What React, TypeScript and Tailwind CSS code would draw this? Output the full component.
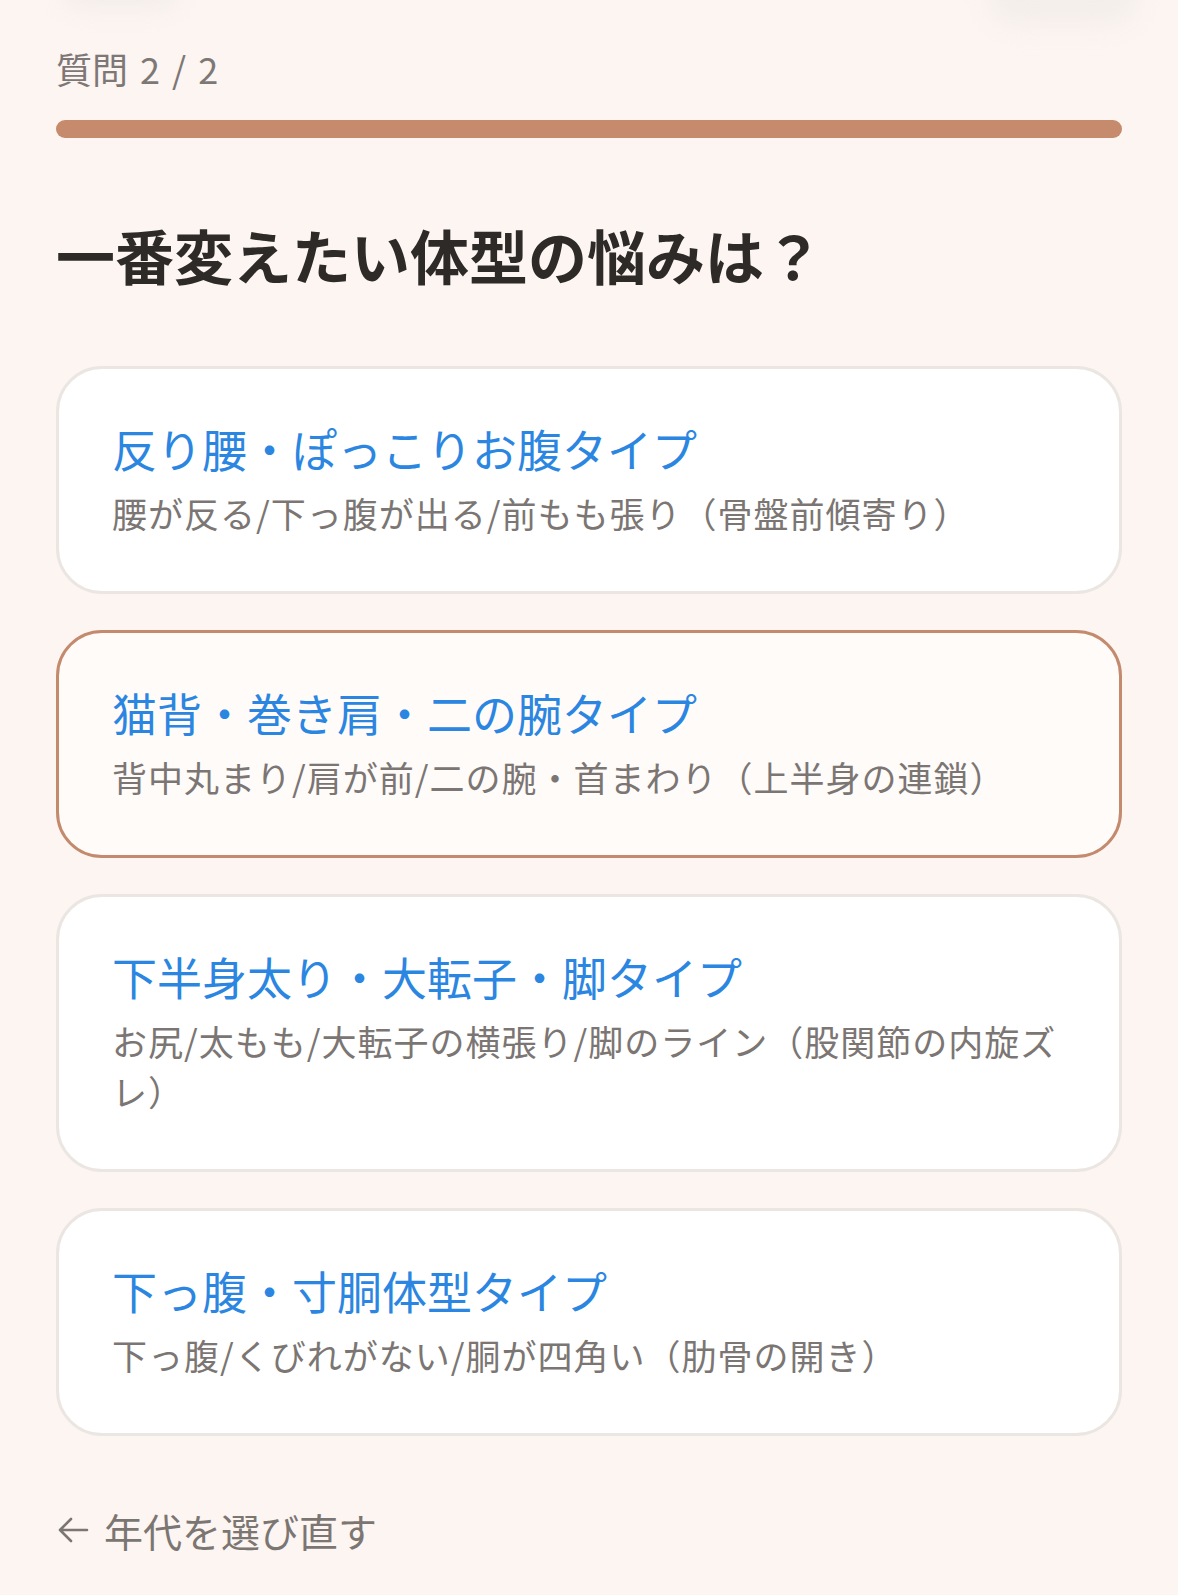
const options = [
  {
    title: '反り腰・ぽっこりお腹タイプ',
    sub: '腰が反る/下っ腹が出る/前もも張り（骨盤前傾寄り）',
    selected: false,
  },
  {
    title: '猫背・巻き肩・二の腕タイプ',
    sub: '背中丸まり/肩が前/二の腕・首まわり（上半身の連鎖）',
    selected: true,
  },
  {
    title: '下半身太り・大転子・脚タイプ',
    sub: 'お尻/太もも/大転子の横張り/脚のライン（股関節の内旋ズレ）',
    selected: false,
  },
  {
    title: '下っ腹・寸胴体型タイプ',
    sub: '下っ腹/くびれがない/胴が四角い（肋骨の開き）',
    selected: false,
  },
]

function OptionCard({ title, sub, selected }: { title: string; sub: string; selected: boolean }) {
  return (
    <button
      type="button"
      className={
        selected
          ? 'w-full text-left rounded-[46px] border-[3px] border-[#c38a6e] bg-[#fffbf9] pl-[53px] pr-[46px] pt-[46px] pb-[53px]'
          : 'w-full text-left rounded-[46px] border-[3px] border-[#ebe6e2] bg-white pl-[53px] pr-[46px] pt-[46px] pb-[53px]'
      }
    >
      <div className="text-[45px] leading-[1.5] text-[#2b86e1]">{title}</div>
      <div className="mt-[6px] text-[35px] leading-[1.42] tracking-[1px] text-[#7b7673]">{sub}</div>
    </button>
  )
}

export default function App() {
  return (
    <div
      className="relative min-h-[1595px] overflow-hidden bg-[#fcf5f2] px-14"
      style={{ fontFamily: '"Noto Sans CJK JP", "Noto Sans", sans-serif' }}
    >
      {/* faint blurred shapes peeking in at the top edge */}
      <div className="absolute left-[60px] top-[-30px] h-[40px] w-[120px] rounded-full bg-[#ece7e3] blur-[12px] opacity-50" />
      <div className="absolute right-[40px] top-[-30px] h-[55px] w-[150px] rounded-full bg-[#ece7e3] blur-[14px] opacity-50" />

      <div className="pt-[41px] text-[36px] leading-[1.5] text-[#7d7875] [word-spacing:4px]">質問 2 / 2</div>

      <div className="mt-[25px] h-[18px] rounded-full bg-[#c68a6c]" />

      <h1 className="mt-[76px] text-[59px] font-bold leading-[1.4] text-[#2d2a27]">
        一番変えたい体型の悩みは？
      </h1>

      <div className="mt-[69px] flex flex-col gap-[36px]">
        {options.map((o) => (
          <OptionCard key={o.title} {...o} />
        ))}
      </div>

      <button
        type="button"
        className="mt-[65px] flex items-center gap-[15px] text-[39px] leading-[1.5] text-[#7b7672]"
      >
        <svg width="32" height="26" viewBox="0 0 32 26" fill="none" className="ml-[1px]">
          <path
            d="M30 13H3M14 2L3 13l11 11"
            stroke="currentColor"
            strokeWidth="2.6"
            strokeLinecap="round"
            strokeLinejoin="round"
          />
        </svg>
        <span>年代を選び直す</span>
      </button>
    </div>
  )
}
